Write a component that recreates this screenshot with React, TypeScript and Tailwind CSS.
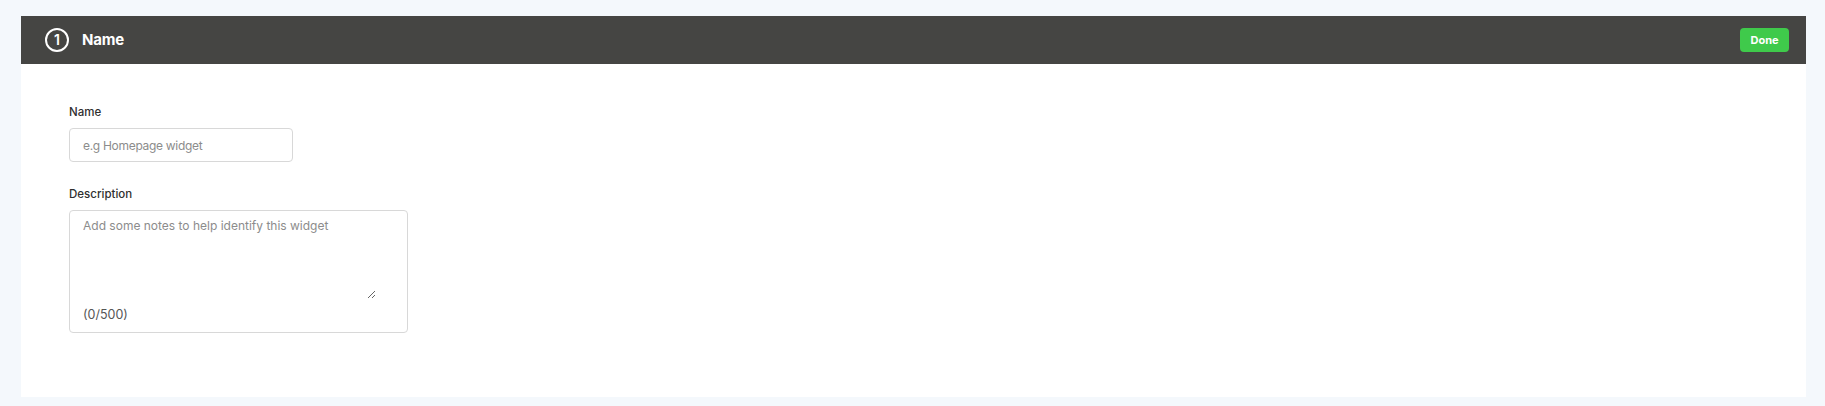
import { useState } from "react";

export default function App() {
  const [name, setName] = useState("");
  const [description, setDescription] = useState("");

  return (
    <div
      className="min-h-[406px] bg-[#f4f8fc] pt-[16px] pr-[19px] pb-[9px] pl-[21px]"
      style={{ fontFamily: "Inter, 'Noto Sans', sans-serif" }}
    >
      <section className="bg-white">
        <header className="flex h-[48px] items-center justify-between bg-[#454543] pl-[24px] pr-[17px]">
          <div className="flex items-center gap-[13px]">
            <span className="flex h-[24px] w-[24px] items-center justify-center rounded-full border-2 border-white text-[14px] font-semibold leading-none text-white">
              1
            </span>
            <h2 className="text-[15px] font-bold tracking-[-0.2px] text-white">Name</h2>
          </div>
          <button
            type="button"
            className="h-[24px] w-[49px] rounded-[4px] bg-[#3fca4b] text-[11px] font-bold text-white"
          >
            Done
          </button>
        </header>

        <div className="pt-[40px] pb-[64px] pl-[48px]">
          <label className="block text-[11.5px] font-medium leading-[16px] text-[#2f2f2f]">
            Name
          </label>
          <input
            value={name}
            onChange={(event) => setName(event.target.value)}
            placeholder="e.g Homepage widget"
            className="mt-[8px] block h-[34px] w-[224px] rounded-[4px] border border-[#d8d8d8] px-[13px] text-[12px] tracking-[-0.3px] text-[#333] outline-none placeholder:text-[#8c8c8c]"
          />

          <label className="mt-[24px] block text-[11.5px] font-medium leading-[16px] text-[#2f2f2f]">
            Description
          </label>
          <div className="mt-[8px] h-[123px] w-[339px] rounded-[4px] border border-[#d8d8d8] px-[13px] pt-[6px]">
            <textarea
              value={description}
              maxLength={500}
              onChange={(event) => setDescription(event.target.value)}
              placeholder="Add some notes to help identify this widget"
              className="block h-[82px] w-[293px] resize-y text-[12px] leading-[18px] text-[#333] outline-none placeholder:text-[#8c8c8c]"
            />
            <p className="mt-[8px] text-[12.5px] leading-[16px] text-[#555]">
              ({description.length}/500)
            </p>
          </div>
        </div>
      </section>
    </div>
  );
}
